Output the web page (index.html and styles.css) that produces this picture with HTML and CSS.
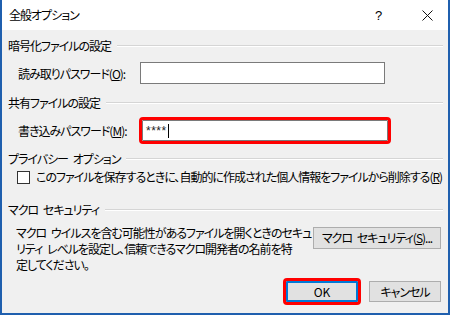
FILE: index.html
```html
<!DOCTYPE html>
<html lang="ja">
<head>
<meta charset="utf-8">
<link rel="stylesheet" href="styles.css">
</head>
<body>
<div class="window">
  <div class="titlebar">
    <span class="title">全般オプション</span>
    <span class="help">?</span>
    <span class="close"><svg width="11" height="11" viewBox="0 0 11 11"><path d="M0.5 0.5 L10.5 10.5 M10.5 0.5 L0.5 10.5" stroke="#111" stroke-width="1" fill="none"/></svg></span>
  </div>
  <div class="body">
    <div class="group-head"><span>暗号化ファイルの設定</span><span class="rule"></span></div>
    <div class="field-row first">
      <span class="label">読み取りパスワード(<u>O</u>):</span>
      <div class="input"></div>
    </div>

    <div class="group-head gh2"><span>共有ファイルの設定</span><span class="rule"></span></div>
    <div class="field-row second">
      <span class="label">書き込みパスワード(<u>M</u>):</span>
      <div class="input marked"><span class="stars">****</span><span class="caret"></span></div>
    </div>

    <div class="group-head gh3"><span>プライバシー オプション</span><span class="rule"></span></div>
    <div class="check-row">
      <span class="checkbox"></span>
      <span class="check-text">このファイルを保存するときに、自動的に作成された個人情報をファイルから削除する(<u>R</u>)</span>
    </div>

    <div class="group-head gh4"><span>マクロ セキュリティ</span><span class="rule"></span></div>
    <div class="macro-row">
      <p class="macro-text">マクロ ウイルスを含む可能性があるファイルを開くときのセキュ<br>リティ レベルを設定し、信頼できるマクロ開発者の名前を特<br>定してください。</p>
      <button class="btn macro-btn">マクロ セキュリティ(<u>S</u>)...</button>
    </div>

    <div class="footer">
      <button class="btn ok">OK</button>
      <button class="btn cancel">キャンセル</button>
    </div>
  </div>
</div>
</body>
</html>
```

FILE: styles.css
```css
html, body {
  margin: 0;
  padding: 0;
  background: #ffffff;
}
body {
  font-family: "Noto Sans CJK JP", "Noto Sans", sans-serif;
  font-size: 12px;
  font-feature-settings: "palt";
  letter-spacing: -1px;
  word-spacing: 3px;
  color: #000;
}
.window {
  width: 450px;
  height: 315px;
  box-sizing: border-box;
  border-left: 2px solid #1f5fae;
  border-right: 2px solid #1f5fae;
  border-bottom: 2px solid #1f5fae;
  background: #f0f0f0;
  display: flex;
  flex-direction: column;
  overflow: hidden;
}
.titlebar {
  height: 30px;
  background: #ffffff;
  display: flex;
  align-items: center;
  padding-left: 7px;
  flex: none;
}
.title {
  flex: 1;
  line-height: 16px;
}
.help {
  font-family: "Liberation Sans", sans-serif;
  font-size: 13px;
  letter-spacing: 0;
  width: 10px;
  margin-right: 37px;
}
.close {
  display: flex;
  margin-right: 15px;
}
.body {
  padding: 8px 5px 0 6px;
  display: flex;
  flex-direction: column;
}
.group-head {
  display: flex;
  align-items: center;
  line-height: 16px;
  height: 16px;
}
.group-head .rule {
  flex: 1;
  margin-left: 6px;
  border-top: 1px solid #d5d5d5;
  border-bottom: 1px solid #ffffff;
}
.gh2 { margin-top: 11px; }
.gh3 { margin-top: 10px; }
.gh4 { margin-top: 17px; }

.field-row {
  display: flex;
  align-items: center;
  padding-left: 10px;
}
.field-row.first { margin-top: 8px; }
.field-row.second { margin-top: 9px; }
.label {
  width: 122px;
  flex: none;
  white-space: nowrap;
}
.input {
  box-sizing: border-box;
  width: 245px;
  height: 22px;
  background: #fff;
  border: 1px solid #7a7a7a;
  flex: none;
}
.input.marked {
  margin-left: 2px;
  width: 246px;
  height: 21px;
  outline: 3px solid #ff0000;
  border-radius: 1px;
  display: flex;
  align-items: center;
  padding-left: 3px;
}
.stars {
  font-family: "Liberation Sans", sans-serif;
  font-size: 12px;
  letter-spacing: 0.5px;
  line-height: 12px;
  color: #222;
}
.caret {
  width: 1px;
  height: 14px;
  background: #000;
  margin-left: 1px;
}
.check-row {
  margin-top: 2px;
  display: flex;
  align-items: center;
  padding-left: 9px;
  height: 16px;
}
.checkbox {
  width: 13px;
  height: 13px;
  box-sizing: border-box;
  border: 1px solid #333;
  background: #fff;
  flex: none;
}
.check-text {
  margin-left: 6px;
  white-space: nowrap;
  line-height: 16px;
}
.macro-row {
  margin-top: 7px;
  display: flex;
  align-items: flex-start;
  justify-content: space-between;
}
.macro-text {
  margin: 0 0 0 8px;
  line-height: 16px;
  white-space: nowrap;
  flex: none;
}
.btn {
  font-family: inherit;
  font-size: 12px;
  font-feature-settings: "palt";
  letter-spacing: -1px;
  word-spacing: 3px;
  color: #000;
  background: #e1e1e1;
  border: 1px solid #adadad;
  border-radius: 0;
  padding: 0;
  margin: 0;
  box-sizing: border-box;
  line-height: 16px;
  white-space: nowrap;
}
.macro-btn {
  width: 128px;
  height: 22px;
  margin-top: 2px;
  margin-right: 2px;
  flex: none;
}
.footer {
  margin-top: 8px;
  display: flex;
  justify-content: flex-end;
  gap: 11px;
  padding-right: 2px;
}
.footer .btn {
  width: 72px;
  height: 21px;
}
.ok {
  border: 2px solid #0078d7;
  outline: 3px solid #ff0000;
  border-radius: 1px;
  letter-spacing: 0;
}
```
